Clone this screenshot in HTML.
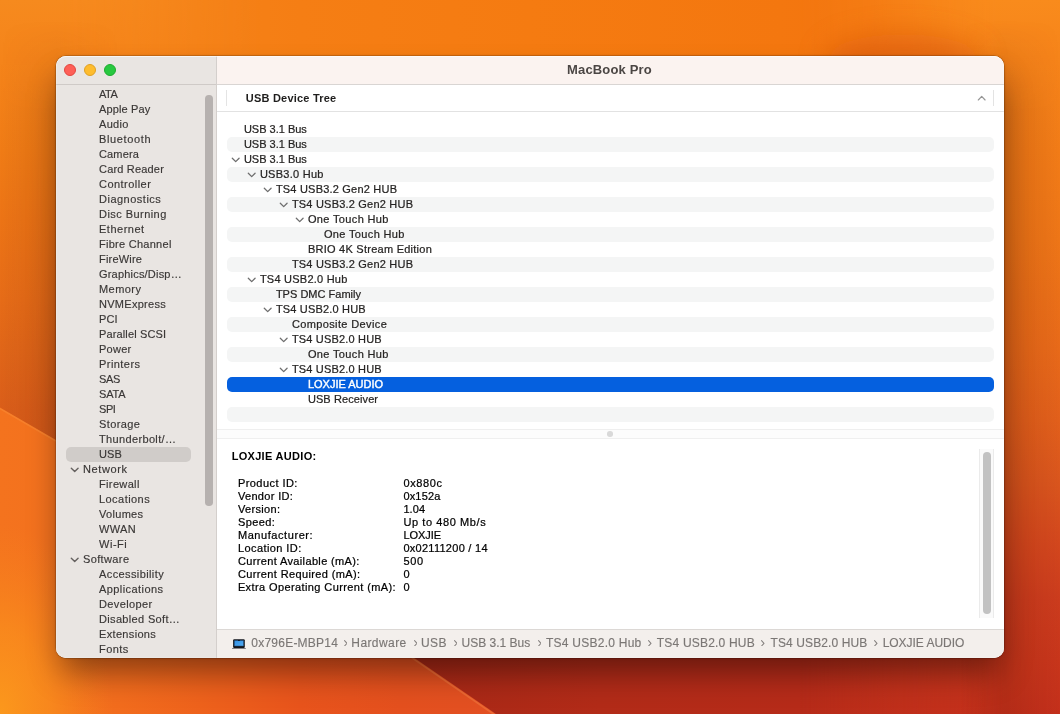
<!DOCTYPE html>
<html><head><meta charset="utf-8"><title>MacBook Pro</title>
<style>
html,body{margin:0;padding:0}
body{width:1060px;height:714px;overflow:hidden;position:relative;background:#e2601a;font-family:"Liberation Sans",sans-serif;}
#wall{position:absolute;left:0;top:0;width:1060px;height:714px;display:block}
#shadow{position:absolute;left:56px;top:56px;width:948px;height:601.6px;border-radius:10px;
  box-shadow:0 19px 32px -5px rgba(0,0,0,.43),0 0 3px rgba(0,0,0,.2),0 0 0 .5px rgba(0,0,0,.25);}
#win{position:absolute;left:56px;top:56px;width:948px;height:601.6px;border-radius:10px;overflow:hidden;background:#fff;will-change:transform;}
.abs{position:absolute}
.t{position:absolute;white-space:nowrap;line-height:14px;height:14px;font-size:11px;color:#262423;-webkit-text-stroke:.22px currentColor}
#side{left:0;top:0;width:160px;height:602px;background:#e9e5e2}
.st{color:#3a3736;-webkit-text-stroke:.16px currentColor}
#sdiv{left:160px;top:0;width:1px;height:602px;background:#d4cfcc}
#tbar{left:161px;top:0;width:787px;height:28px;background:#fbf3f0}
#tline{left:161px;top:28px;width:787px;height:1px;background:#d9d5d3}
#sline{left:0;top:28px;width:160px;height:1px;background:#cfcac7}
.tl{position:absolute;top:8px;width:12px;height:12px;border-radius:50%;box-sizing:border-box}
.band{position:absolute;left:171px;width:766.5px;height:14.5px;border-radius:5px;background:#f4f5f5}
.sel{background:#0560df}
svg{display:block}
.chev{position:absolute;overflow:visible}
.pt{position:absolute;white-space:nowrap;font-size:12px;line-height:14px;height:14px;top:580px;color:#7b7775;-webkit-text-stroke:.15px currentColor}
</style></head><body>
<svg id="wall" viewBox="0 0 1060 714" preserveAspectRatio="none">
<defs>
<linearGradient id="gT" gradientUnits="userSpaceOnUse" x1="0" y1="0" x2="1060" y2="0"><stop offset="0.0000" stop-color="#f68a1e"/><stop offset="0.0566" stop-color="#f5851b"/><stop offset="0.2830" stop-color="#f57e14"/><stop offset="0.5000" stop-color="#f57b11"/><stop offset="0.7358" stop-color="#f4770f"/><stop offset="0.8208" stop-color="#f3740f"/><stop offset="0.8962" stop-color="#f57b13"/><stop offset="1.0000" stop-color="#f98b1c"/></linearGradient>
<linearGradient id="gB" gradientUnits="userSpaceOnUse" x1="0" y1="0" x2="1060" y2="0"><stop offset="0.0000" stop-color="#a02614"/><stop offset="0.3896" stop-color="#a82816"/><stop offset="0.5660" stop-color="#b22b18"/><stop offset="0.7547" stop-color="#b62b19"/><stop offset="0.8962" stop-color="#bc2f1a"/><stop offset="1.0000" stop-color="#c8361c"/></linearGradient>
<linearGradient id="gL" gradientUnits="userSpaceOnUse" x1="0" y1="0" x2="0" y2="714"><stop offset="0.0000" stop-color="#f68a1e"/><stop offset="0.0840" stop-color="#f5841a"/><stop offset="0.2101" stop-color="#f07c16"/><stop offset="0.3081" stop-color="#ec7416"/><stop offset="0.4202" stop-color="#e66c18"/><stop offset="0.4902" stop-color="#e06619"/><stop offset="0.5742" stop-color="#da5e1a"/><stop offset="0.6162" stop-color="#d85c1a"/><stop offset="1.0000" stop-color="#c8481a"/></linearGradient>
<linearGradient id="gR" gradientUnits="userSpaceOnUse" x1="0" y1="0" x2="0" y2="714"><stop offset="0.0000" stop-color="#f98b1c"/><stop offset="0.0784" stop-color="#f6841a"/><stop offset="0.2101" stop-color="#f27c18"/><stop offset="0.3361" stop-color="#ee7618"/><stop offset="0.4902" stop-color="#e86a1a"/><stop offset="0.5882" stop-color="#e2601c"/><stop offset="0.6723" stop-color="#da561e"/><stop offset="0.7563" stop-color="#d4481e"/><stop offset="0.8403" stop-color="#cc3c1e"/><stop offset="0.9244" stop-color="#c8361c"/><stop offset="1.0000" stop-color="#c4301c"/></linearGradient>
<linearGradient id="gP" gradientUnits="userSpaceOnUse" x1="0" y1="0" x2="520" y2="0"><stop offset="0.0000" stop-color="#f4731e"/><stop offset="0.1077" stop-color="#f3711e"/><stop offset="0.2308" stop-color="#f26c1d"/><stop offset="0.3846" stop-color="#ee621c"/><stop offset="0.5769" stop-color="#e8541c"/><stop offset="0.7692" stop-color="#e4501e"/><stop offset="1.0000" stop-color="#e25024"/></linearGradient>
<linearGradient id="aV" gradientUnits="userSpaceOnUse" x1="0" y1="80" x2="0" y2="640"><stop offset="0" stop-color="#000"/><stop offset="1" stop-color="#fff"/></linearGradient>
<linearGradient id="aL" gradientUnits="userSpaceOnUse" x1="60" y1="0" x2="260" y2="0"><stop offset="0" stop-color="#fff"/><stop offset="1" stop-color="#000"/></linearGradient>
<linearGradient id="aR" gradientUnits="userSpaceOnUse" x1="800" y1="0" x2="1004" y2="0"><stop offset="0" stop-color="#000"/><stop offset="1" stop-color="#fff"/></linearGradient>
<mask id="mV" maskUnits="userSpaceOnUse" x="0" y="0" width="1060" height="714"><rect width="1060" height="714" fill="url(#aV)"/></mask>
<mask id="mL" maskUnits="userSpaceOnUse" x="0" y="0" width="1060" height="714"><rect width="1060" height="714" fill="url(#aL)"/></mask>
<mask id="mR" maskUnits="userSpaceOnUse" x="0" y="0" width="1060" height="714"><rect width="1060" height="714" fill="url(#aR)"/></mask>
<radialGradient id="gH" gradientUnits="userSpaceOnUse" cx="0" cy="714" r="190" gradientTransform="translate(0 714) scale(.6 1) translate(0 -714)"><stop offset="0" stop-color="#fc9a1c" stop-opacity=".95"/><stop offset=".45" stop-color="#fb951c" stop-opacity=".6"/><stop offset="1" stop-color="#f8861c" stop-opacity="0"/></radialGradient>
<linearGradient id="dR" gradientUnits="userSpaceOnUse" x1="960" y1="0" x2="1060" y2="0"><stop offset="0" stop-color="#5a1400" stop-opacity="0"/><stop offset=".44" stop-color="#5a1400" stop-opacity=".16"/><stop offset="1" stop-color="#5a1400" stop-opacity="0"/></linearGradient>
<linearGradient id="dL" gradientUnits="userSpaceOnUse" x1="0" y1="0" x2="120" y2="0"><stop offset="0" stop-color="#5a1400" stop-opacity="0"/><stop offset=".47" stop-color="#5a1400" stop-opacity=".12"/><stop offset="1" stop-color="#5a1400" stop-opacity="0"/></linearGradient>
<linearGradient id="aD" gradientUnits="userSpaceOnUse" x1="0" y1="20" x2="0" y2="110"><stop offset="0" stop-color="#000"/><stop offset="1" stop-color="#fff"/></linearGradient>
<mask id="mD" maskUnits="userSpaceOnUse" x="0" y="0" width="1060" height="714"><rect width="1060" height="714" fill="url(#aD)"/></mask>
<clipPath id="cP"><path d="M0 407.5 L56 440 C 150 495, 300 575, 413 657 L 496 714 L 0 714 Z"/></clipPath>
<filter id="b1" x="-5%" y="-5%" width="110%" height="110%"><feGaussianBlur stdDeviation=".7"/></filter>
<filter id="b14" x="-40%" y="-80%" width="180%" height="260%"><feGaussianBlur stdDeviation="14"/></filter>
</defs>
<rect width="1060" height="714" fill="url(#gT)"/>
<rect width="1060" height="714" fill="url(#gB)" mask="url(#mV)"/>
<rect width="1060" height="714" fill="url(#gL)" mask="url(#mL)"/>
<rect width="1060" height="714" fill="url(#gR)" mask="url(#mR)"/>
<rect x="960" y="0" width="100" height="714" fill="url(#dR)" mask="url(#mD)"/>
<rect x="0" y="0" width="120" height="460" fill="url(#dL)" mask="url(#mD)"/>
<ellipse cx="903" cy="60" rx="78" ry="26" fill="#d65208" opacity=".52" filter="url(#b14)"/>
<path d="M0 407.5 L56 440 C 150 495, 300 575, 413 657 L 496 714 L 0 714 Z" fill="url(#gP)"/>
<g clip-path="url(#cP)"><rect x="0" y="500" width="160" height="214" fill="url(#gH)"/>
<path d="M0 408.5 L56 441" fill="none" stroke="#fb9a44" stroke-opacity=".32" stroke-width="1.6" filter="url(#b1)"/>
<path d="M412 657.8 L 495 715" fill="none" stroke="#f58648" stroke-opacity=".45" stroke-width="1.6" filter="url(#b1)"/></g>
</svg>
<div id="shadow"></div>
<div id="win">
<div id="side" class="abs"></div><div id="sline" class="abs"></div><div id="sdiv" class="abs"></div>
<div id="tbar" class="abs"></div><div id="tline" class="abs"></div>
<div class="tl" style="left:8px;background:#fe5f57;border:.5px solid #e2463f"></div><div class="tl" style="left:28px;background:#febc2e;border:.5px solid #dfa023"></div><div class="tl" style="left:48px;background:#28c840;border:.5px solid #1eab2f"></div>
<div class="t" id="title" style="left:511.05px;top:5.5px;font-size:13px;font-weight:700;-webkit-text-stroke:0;line-height:16px;height:16px;color:#4b4644;letter-spacing:0.155px;">MacBook Pro</div>
<div class="abs" style="left:10px;top:391px;width:125px;height:15px;border-radius:5px;background:#d0ccc9"></div>
<div class="t st" id="s0" style="left:43.0px;top:31px;letter-spacing:-0.425px;">ATA</div>
<div class="t st" id="s1" style="left:43.0px;top:46px;letter-spacing:0.138px;">Apple Pay</div>
<div class="t st" id="s2" style="left:43.0px;top:61px;letter-spacing:0.312px;">Audio</div>
<div class="t st" id="s3" style="left:43.0px;top:76px;letter-spacing:0.631px;">Bluetooth</div>
<div class="t st" id="s4" style="left:43.0px;top:91px;letter-spacing:0.150px;">Camera</div>
<div class="t st" id="s5" style="left:43.0px;top:106px;letter-spacing:0.185px;">Card Reader</div>
<div class="t st" id="s6" style="left:43.0px;top:121px;letter-spacing:0.456px;">Controller</div>
<div class="t st" id="s7" style="left:43.0px;top:136px;letter-spacing:0.500px;">Diagnostics</div>
<div class="t st" id="s8" style="left:43.0px;top:151px;letter-spacing:0.450px;">Disc Burning</div>
<div class="t st" id="s9" style="left:43.0px;top:166px;letter-spacing:0.514px;">Ethernet</div>
<div class="t st" id="s10" style="left:43.0px;top:181px;letter-spacing:0.271px;">Fibre Channel</div>
<div class="t st" id="s11" style="left:43.0px;top:196px;letter-spacing:0.200px;">FireWire</div>
<div class="t st" id="s12" style="left:43.0px;top:211px;letter-spacing:0.200px;">Graphics/Disp…</div>
<div class="t st" id="s13" style="left:43.0px;top:226px;letter-spacing:0.450px;">Memory</div>
<div class="t st" id="s14" style="left:43.0px;top:241px;letter-spacing:0.283px;">NVMExpress</div>
<div class="t st" id="s15" style="left:43.0px;top:256px;letter-spacing:0.075px;">PCI</div>
<div class="t st" id="s16" style="left:43.0px;top:271px;letter-spacing:0.133px;">Parallel SCSI</div>
<div class="t st" id="s17" style="left:43.0px;top:286px;letter-spacing:0.250px;">Power</div>
<div class="t st" id="s18" style="left:43.0px;top:301px;letter-spacing:0.443px;">Printers</div>
<div class="t st" id="s19" style="left:43.0px;top:316px;letter-spacing:-0.300px;">SAS</div>
<div class="t st" id="s20" style="left:43.0px;top:331px;letter-spacing:-0.167px;">SATA</div>
<div class="t st" id="s21" style="left:43.0px;top:346px;letter-spacing:-0.425px;">SPI</div>
<div class="t st" id="s22" style="left:43.0px;top:361px;letter-spacing:0.400px;">Storage</div>
<div class="t st" id="s23" style="left:43.0px;top:376px;letter-spacing:0.350px;">Thunderbolt/…</div>
<div class="t st" id="s24" style="left:43.0px;top:391px;letter-spacing:0.075px;">USB</div>
<div class="t st" id="s25" style="left:27.0px;top:406px;letter-spacing:0.592px;">Network</div><svg class="chev" style="left:14.900000000000006px;top:412.3px" width="7.4" height="3.9" viewBox="0 0 7.4 3.9"><path d="M0.3 0.2 L3.7 3.6 L7.1000000000000005 0.2" fill="none" stroke="#65615f" stroke-width="1.4" stroke-linecap="round" stroke-linejoin="round"/></svg>
<div class="t st" id="s26" style="left:43.0px;top:421px;letter-spacing:0.350px;">Firewall</div>
<div class="t st" id="s27" style="left:43.0px;top:436px;letter-spacing:0.444px;">Locations</div>
<div class="t st" id="s28" style="left:43.0px;top:451px;letter-spacing:0.308px;">Volumes</div>
<div class="t st" id="s29" style="left:43.0px;top:466px;letter-spacing:0.383px;">WWAN</div>
<div class="t st" id="s30" style="left:43.0px;top:481px;letter-spacing:0.525px;">Wi-Fi</div>
<div class="t st" id="s31" style="left:27.0px;top:496px;letter-spacing:0.371px;">Software</div><svg class="chev" style="left:14.900000000000006px;top:502.3px" width="7.4" height="3.9" viewBox="0 0 7.4 3.9"><path d="M0.3 0.2 L3.7 3.6 L7.1000000000000005 0.2" fill="none" stroke="#65615f" stroke-width="1.4" stroke-linecap="round" stroke-linejoin="round"/></svg>
<div class="t st" id="s32" style="left:43.0px;top:511px;letter-spacing:0.396px;">Accessibility</div>
<div class="t st" id="s33" style="left:43.0px;top:526px;letter-spacing:0.427px;">Applications</div>
<div class="t st" id="s34" style="left:43.0px;top:541px;letter-spacing:0.388px;">Developer</div>
<div class="t st" id="s35" style="left:43.0px;top:556px;letter-spacing:0.338px;">Disabled Soft…</div>
<div class="t st" id="s36" style="left:43.0px;top:571px;letter-spacing:0.333px;">Extensions</div>
<div class="t st" id="s37" style="left:43.0px;top:586px;letter-spacing:0.463px;">Fonts</div>
<div class="abs" style="left:149.4px;top:39px;width:7.6px;height:411px;border-radius:3.8px;background:#b6b1af"></div>
<div class="abs" style="left:170px;top:34px;width:1px;height:15.5px;background:#e4e4e4"></div><div class="abs" style="left:937px;top:34px;width:1px;height:16px;background:#e3e3e3"></div><div class="t" id="hdr" style="left:189.85px;top:35px;font-weight:700;-webkit-text-stroke:0;color:#1f1e1d;letter-spacing:0.204px;">USB Device Tree</div><svg class="chev" style="left:922px;top:40px" width="7.4" height="4.2" viewBox="0 0 7.4 4.2"><path d="M0.3 4 L3.7 0.4 L7.1 4" fill="none" stroke="#979797" stroke-width="1.2" stroke-linecap="round" stroke-linejoin="round"/></svg><div class="abs" style="left:161px;top:55px;width:787px;height:1px;background:#e2e2e2"></div>
<div class="t" id="r0" style="left:187.9px;top:66px;">USB 3.1 Bus</div>
<div class="band" style="top:81.1px"></div><div class="t" id="r1" style="left:187.9px;top:81px;">USB 3.1 Bus</div>
<div class="t" id="r2" style="left:187.9px;top:96px;">USB 3.1 Bus</div><svg class="chev" style="left:176.1px;top:101.9px" width="7.4" height="3.9" viewBox="0 0 7.4 3.9"><path d="M0.3 0.2 L3.7 3.6 L7.1000000000000005 0.2" fill="none" stroke="#6f6f6f" stroke-width="1.3" stroke-linecap="round" stroke-linejoin="round"/></svg>
<div class="band" style="top:111.1px"></div><div class="t" id="r3" style="left:203.9px;top:111px;letter-spacing:0.267px;">USB3.0 Hub</div><svg class="chev" style="left:192.1px;top:116.9px" width="7.4" height="3.9" viewBox="0 0 7.4 3.9"><path d="M0.3 0.2 L3.7 3.6 L7.1000000000000005 0.2" fill="none" stroke="#6f6f6f" stroke-width="1.3" stroke-linecap="round" stroke-linejoin="round"/></svg>
<div class="t" id="r4" style="left:219.9px;top:126px;letter-spacing:0.206px;">TS4 USB3.2 Gen2 HUB</div><svg class="chev" style="left:208.10000000000002px;top:131.9px" width="7.4" height="3.9" viewBox="0 0 7.4 3.9"><path d="M0.3 0.2 L3.7 3.6 L7.1000000000000005 0.2" fill="none" stroke="#6f6f6f" stroke-width="1.3" stroke-linecap="round" stroke-linejoin="round"/></svg>
<div class="band" style="top:141.1px"></div><div class="t" id="r5" style="left:235.9px;top:141px;letter-spacing:0.206px;">TS4 USB3.2 Gen2 HUB</div><svg class="chev" style="left:224.10000000000002px;top:146.9px" width="7.4" height="3.9" viewBox="0 0 7.4 3.9"><path d="M0.3 0.2 L3.7 3.6 L7.1000000000000005 0.2" fill="none" stroke="#6f6f6f" stroke-width="1.3" stroke-linecap="round" stroke-linejoin="round"/></svg>
<div class="t" id="r6" style="left:251.9px;top:156px;letter-spacing:0.362px;">One Touch Hub</div><svg class="chev" style="left:240.10000000000002px;top:161.9px" width="7.4" height="3.9" viewBox="0 0 7.4 3.9"><path d="M0.3 0.2 L3.7 3.6 L7.1000000000000005 0.2" fill="none" stroke="#6f6f6f" stroke-width="1.3" stroke-linecap="round" stroke-linejoin="round"/></svg>
<div class="band" style="top:171.1px"></div><div class="t" id="r7" style="left:267.9px;top:171px;letter-spacing:0.362px;">One Touch Hub</div>
<div class="t" id="r8" style="left:251.9px;top:186px;letter-spacing:0.252px;">BRIO 4K Stream Edition</div>
<div class="band" style="top:201.1px"></div><div class="t" id="r9" style="left:235.9px;top:201px;letter-spacing:0.206px;">TS4 USB3.2 Gen2 HUB</div>
<div class="t" id="r10" style="left:203.9px;top:216px;letter-spacing:0.235px;">TS4 USB2.0 Hub</div><svg class="chev" style="left:192.1px;top:221.9px" width="7.4" height="3.9" viewBox="0 0 7.4 3.9"><path d="M0.3 0.2 L3.7 3.6 L7.1000000000000005 0.2" fill="none" stroke="#6f6f6f" stroke-width="1.3" stroke-linecap="round" stroke-linejoin="round"/></svg>
<div class="band" style="top:231.1px"></div><div class="t" id="r11" style="left:219.9px;top:231px;letter-spacing:0.012px;">TPS DMC Family</div>
<div class="t" id="r12" style="left:219.9px;top:246px;letter-spacing:0.177px;">TS4 USB2.0 HUB</div><svg class="chev" style="left:208.10000000000002px;top:251.9px" width="7.4" height="3.9" viewBox="0 0 7.4 3.9"><path d="M0.3 0.2 L3.7 3.6 L7.1000000000000005 0.2" fill="none" stroke="#6f6f6f" stroke-width="1.3" stroke-linecap="round" stroke-linejoin="round"/></svg>
<div class="band" style="top:261.1px"></div><div class="t" id="r13" style="left:235.9px;top:261px;letter-spacing:0.377px;">Composite Device</div>
<div class="t" id="r14" style="left:235.9px;top:276px;letter-spacing:0.177px;">TS4 USB2.0 HUB</div><svg class="chev" style="left:224.10000000000002px;top:281.9px" width="7.4" height="3.9" viewBox="0 0 7.4 3.9"><path d="M0.3 0.2 L3.7 3.6 L7.1000000000000005 0.2" fill="none" stroke="#6f6f6f" stroke-width="1.3" stroke-linecap="round" stroke-linejoin="round"/></svg>
<div class="band" style="top:291.1px"></div><div class="t" id="r15" style="left:251.9px;top:291px;letter-spacing:0.362px;">One Touch Hub</div>
<div class="t" id="r16" style="left:235.9px;top:306px;letter-spacing:0.177px;">TS4 USB2.0 HUB</div><svg class="chev" style="left:224.10000000000002px;top:311.9px" width="7.4" height="3.9" viewBox="0 0 7.4 3.9"><path d="M0.3 0.2 L3.7 3.6 L7.1000000000000005 0.2" fill="none" stroke="#6f6f6f" stroke-width="1.3" stroke-linecap="round" stroke-linejoin="round"/></svg>
<div class="band sel" style="top:321.1px"></div><div class="t" id="r17" style="left:251.9px;top:321px;color:#fff;-webkit-text-stroke:.4px #fff;">LOXJIE AUDIO</div>
<div class="t" id="r18" style="left:251.9px;top:336px;letter-spacing:0.095px;">USB Receiver</div>
<div class="band" style="top:351.1px"></div>
<div class="abs" style="left:161px;top:373px;width:787px;height:10px;background:#fcfcfc;border-top:1px solid #efefef;border-bottom:1px solid #efefef;box-sizing:border-box"></div><div class="abs" style="left:551px;top:375.2px;width:5.6px;height:5.6px;border-radius:50%;background:#d9d9d9"></div>
<div class="t" id="dh" style="left:175.65px;top:392.6px;font-weight:700;-webkit-text-stroke:0;color:#000;letter-spacing:0.308px;">LOXJIE AUDIO:</div>
<div class="t" id="k0" style="left:181.9px;top:419.9px;color:#000;letter-spacing:0.450px;">Product ID:</div><div class="t" id="v0" style="left:347.4px;top:419.9px;color:#000;letter-spacing:0.650px;">0x880c</div>
<div class="t" id="k1" style="left:181.9px;top:432.9px;color:#000;letter-spacing:0.333px;">Vendor ID:</div><div class="t" id="v1" style="left:347.4px;top:432.9px;color:#000;letter-spacing:0.170px;">0x152a</div>
<div class="t" id="k2" style="left:181.9px;top:445.9px;color:#000;letter-spacing:0.336px;">Version:</div><div class="t" id="v2" style="left:347.4px;top:445.9px;color:#000;letter-spacing:0.067px;">1.04</div>
<div class="t" id="k3" style="left:181.9px;top:458.9px;color:#000;letter-spacing:0.400px;">Speed:</div><div class="t" id="v3" style="left:347.4px;top:458.9px;color:#000;letter-spacing:0.592px;">Up to 480 Mb/s</div>
<div class="t" id="k4" style="left:181.9px;top:471.9px;color:#000;letter-spacing:0.575px;">Manufacturer:</div><div class="t" id="v4" style="left:347.4px;top:471.9px;color:#000;letter-spacing:-0.060px;">LOXJIE</div>
<div class="t" id="k5" style="left:181.9px;top:484.9px;color:#000;letter-spacing:0.423px;">Location ID:</div><div class="t" id="v5" style="left:347.4px;top:484.9px;color:#000;letter-spacing:0.271px;">0x02111200 / 14</div>
<div class="t" id="k6" style="left:181.9px;top:497.9px;color:#000;letter-spacing:0.364px;">Current Available (mA):</div><div class="t" id="v6" style="left:347.4px;top:497.9px;color:#000;letter-spacing:0.650px;">500</div>
<div class="t" id="k7" style="left:181.9px;top:510.9px;color:#000;letter-spacing:0.379px;">Current Required (mA):</div><div class="t" id="v7" style="left:347.4px;top:510.9px;color:#000;">0</div>
<div class="t" id="k8" style="left:181.9px;top:523.9px;color:#000;letter-spacing:0.395px;">Extra Operating Current (mA):</div><div class="t" id="v8" style="left:347.4px;top:523.9px;color:#000;">0</div>
<div class="abs" style="left:923px;top:393px;width:15px;height:169px;background:#fafafa;border-left:1px solid #ebebeb;border-right:1px solid #ebebeb;box-sizing:border-box"></div><div class="abs" style="left:927px;top:396px;width:8px;height:162px;border-radius:4px;background:#c2c2c2"></div>
<div class="abs" style="left:161px;top:573px;width:787px;height:29px;background:#f3efec;border-top:1px solid #dcd8d5;box-sizing:border-box"></div>
<svg class="abs" style="left:176px;top:583px" width="14" height="10" viewBox="0 0 14 10">
<defs><linearGradient id="scr" x1="0" y1="0" x2="1" y2="1"><stop offset="0" stop-color="#2f8fe4"/><stop offset="1" stop-color="#55adf2"/></linearGradient></defs>
<rect x="1.1" y="0.15" width="11.7" height="8.85" rx="1.1" fill="#15171b"/>
<rect x="2.3" y="1.45" width="9.3" height="5.6" rx=".3" fill="url(#scr)" stroke="#1a3f6b" stroke-width=".5"/>
<rect x="6" y="1" width="1.9" height=".9" rx=".3" fill="#15171b"/>
<rect x="0" y="9.1" width="13.9" height=".85" rx=".3" fill="#828287"/>
</svg>
<div class="pt" id="p0" style="left:195.30px;letter-spacing:0.232px;">0x796E-MBP14</div><div class="pt" id="p1" style="left:295.30px;letter-spacing:0.414px;">Hardware</div><div class="pt" id="p2" style="left:365.00px;letter-spacing:0.400px;">USB</div><div class="pt" id="p3" style="left:405.50px;letter-spacing:0.005px;">USB 3.1 Bus</div><div class="pt" id="p4" style="left:489.95px;letter-spacing:0.250px;">TS4 USB2.0 Hub</div><div class="pt" id="p5" style="left:600.85px;letter-spacing:0.192px;">TS4 USB2.0 HUB</div><div class="pt" id="p6" style="left:714.55px;letter-spacing:0.108px;">TS4 USB2.0 HUB</div><div class="pt" id="p7" style="left:826.70px;letter-spacing:-0.036px;">LOXJIE AUDIO</div><svg class="abs" style="left:287.8px;top:583.5px" width="3.6" height="6.6" viewBox="0 0 3.6 6.6"><path d="M0.55 0.6 L3.0 3.3 L0.55 6.0" fill="none" stroke="#85817f" stroke-width="1.05" stroke-linecap="round" stroke-linejoin="round"/></svg><svg class="abs" style="left:357.6px;top:583.5px" width="3.6" height="6.6" viewBox="0 0 3.6 6.6"><path d="M0.55 0.6 L3.0 3.3 L0.55 6.0" fill="none" stroke="#85817f" stroke-width="1.05" stroke-linecap="round" stroke-linejoin="round"/></svg><svg class="abs" style="left:397.8px;top:583.5px" width="3.6" height="6.6" viewBox="0 0 3.6 6.6"><path d="M0.55 0.6 L3.0 3.3 L0.55 6.0" fill="none" stroke="#85817f" stroke-width="1.05" stroke-linecap="round" stroke-linejoin="round"/></svg><svg class="abs" style="left:481.5px;top:583.5px" width="3.6" height="6.6" viewBox="0 0 3.6 6.6"><path d="M0.55 0.6 L3.0 3.3 L0.55 6.0" fill="none" stroke="#85817f" stroke-width="1.05" stroke-linecap="round" stroke-linejoin="round"/></svg><svg class="abs" style="left:592.4px;top:583.5px" width="3.6" height="6.6" viewBox="0 0 3.6 6.6"><path d="M0.55 0.6 L3.0 3.3 L0.55 6.0" fill="none" stroke="#85817f" stroke-width="1.05" stroke-linecap="round" stroke-linejoin="round"/></svg><svg class="abs" style="left:705.4px;top:583.5px" width="3.6" height="6.6" viewBox="0 0 3.6 6.6"><path d="M0.55 0.6 L3.0 3.3 L0.55 6.0" fill="none" stroke="#85817f" stroke-width="1.05" stroke-linecap="round" stroke-linejoin="round"/></svg><svg class="abs" style="left:818.3px;top:583.5px" width="3.6" height="6.6" viewBox="0 0 3.6 6.6"><path d="M0.55 0.6 L3.0 3.3 L0.55 6.0" fill="none" stroke="#85817f" stroke-width="1.05" stroke-linecap="round" stroke-linejoin="round"/></svg><div class="abs" style="left:0;top:0;width:948px;height:602px;border-radius:10px;box-shadow:inset 0 1px 0 rgba(255,255,255,.55),inset 0 0 0 .5px rgba(255,255,255,.3);pointer-events:none"></div>
</div>
</body></html>
